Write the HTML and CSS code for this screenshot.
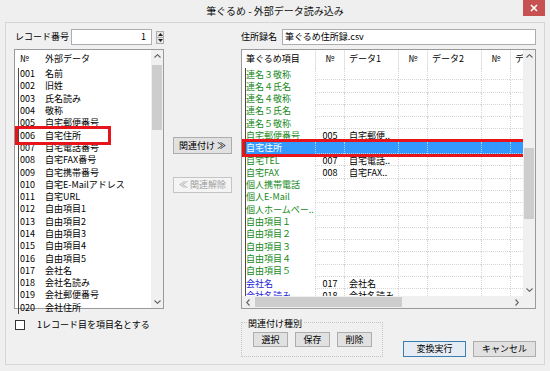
FILE: index.html
```html
<!DOCTYPE html>
<html lang="ja">
<head>
    <meta charset="UTF-8"/>
    <title>筆ぐるめ - 外部データ読み込み</title>
    <link rel="stylesheet" href="styles.css">
</head>
<body>
<div class="window">
    <div class="titlebar">
        <span></span>
        <span class="title">筆ぐるめ - 外部データ読み込み</span>
        <span class="close">
            <svg width="8" height="8" viewBox="0 0 8 8"><path d="M1 1L7 7M7 1L1 7" stroke="#fff" stroke-width="1.6"/></svg>
        </span>
    </div>

    <div class="client">
        <!-- 上段 -->
        <div class="rec">
            <span class="lbl">レコード番号</span>
            <div class="numbox">1</div>
            <div class="spin">
                <span><svg width="5" height="3" viewBox="0 0 5 3"><path d="M0 3L2.5 0L5 3Z" fill="#222"/></svg></span>
                <span><svg width="5" height="3" viewBox="0 0 5 3"><path d="M0 0L2.5 3L5 0Z" fill="#222"/></svg></span>
            </div>
        </div>
        <div></div>
        <div class="book">
            <span class="lbl">住所録名</span>
            <div class="textbox">筆ぐるめ住所録.csv</div>
        </div>

        <!-- 外部データ一覧 -->
        <div class="list">
            <div class="pane">
                <div class="lhead"><span class="no">№</span><span>外部データ</span></div>
                <div class="lbody">
                    <div class="row"><span class="no">001</span><span>名前</span></div>
                    <div class="row"><span class="no">002</span><span>旧姓</span></div>
                    <div class="row"><span class="no">003</span><span>氏名読み</span></div>
                    <div class="row"><span class="no">004</span><span>敬称</span></div>
                    <div class="row"><span class="no">005</span><span>自宅郵便番号</span></div>
                    <div class="row hl"><span class="no">006</span><span>自宅住所</span></div>
                    <div class="row"><span class="no">007</span><span>自宅電話番号</span></div>
                    <div class="row"><span class="no">008</span><span>自宅FAX番号</span></div>
                    <div class="row"><span class="no">009</span><span>自宅携帯番号</span></div>
                    <div class="row"><span class="no">010</span><span>自宅E-Mailアドレス</span></div>
                    <div class="row"><span class="no">011</span><span>自宅URL</span></div>
                    <div class="row"><span class="no">012</span><span>自由項目1</span></div>
                    <div class="row"><span class="no">013</span><span>自由項目2</span></div>
                    <div class="row"><span class="no">014</span><span>自由項目3</span></div>
                    <div class="row"><span class="no">015</span><span>自由項目4</span></div>
                    <div class="row"><span class="no">016</span><span>自由項目5</span></div>
                    <div class="row"><span class="no">017</span><span>会社名</span></div>
                    <div class="row"><span class="no">018</span><span>会社名読み</span></div>
                    <div class="row"><span class="no">019</span><span>会社郵便番号</span></div>
                    <div class="row"><span class="no">020</span><span>会社住所</span></div>
                </div>
            </div>
            <div class="vscroll">
                <span class="arrow"><svg width="7" height="4" viewBox="0 0 7 4"><path d="M0.5 3.5L3.5 0.7L6.5 3.5" fill="none" stroke="#606060" stroke-width="1.1"/></svg></span>
                <div class="track"><div class="thumb left-thumb"></div></div>
                <span class="arrow"><svg width="7" height="4" viewBox="0 0 7 4"><path d="M0.5 0.5L3.5 3.3L6.5 0.5" fill="none" stroke="#606060" stroke-width="1.1"/></svg></span>
            </div>
        </div>

        <!-- 関連付けボタン -->
        <div class="mid">
            <button class="btn link">関連付け ≫</button>
            <button class="btn unlink" disabled>≪ 関連解除</button>
        </div>

        <!-- 筆ぐるめ項目 -->
        <div class="grid">
            <div class="pane">
                <div class="ghead">
                    <span class="h">筆ぐるめ項目</span>
                    <span class="h n">№</span>
                    <span class="h">データ1</span>
                    <span class="h n">№</span>
                    <span class="h">データ2</span>
                    <span class="h n">№</span>
                    <span class="h">デ</span>
                </div>
                <div class="gbody">
                    <div class="grow g"><span class="nm">連名３敬称</span><span class="c n"></span><span class="c"></span><span class="c n"></span><span class="c"></span><span class="c n"></span><span class="c"></span></div>
                    <div class="grow g"><span class="nm">連名４氏名</span><span class="c n"></span><span class="c"></span><span class="c n"></span><span class="c"></span><span class="c n"></span><span class="c"></span></div>
                    <div class="grow g"><span class="nm">連名４敬称</span><span class="c n"></span><span class="c"></span><span class="c n"></span><span class="c"></span><span class="c n"></span><span class="c"></span></div>
                    <div class="grow g"><span class="nm">連名５氏名</span><span class="c n"></span><span class="c"></span><span class="c n"></span><span class="c"></span><span class="c n"></span><span class="c"></span></div>
                    <div class="grow g"><span class="nm">連名５敬称</span><span class="c n"></span><span class="c"></span><span class="c n"></span><span class="c"></span><span class="c n"></span><span class="c"></span></div>
                    <div class="grow g"><span class="nm">自宅郵便番号</span><span class="c n">005</span><span class="c">自宅郵便..</span><span class="c n"></span><span class="c"></span><span class="c n"></span><span class="c"></span></div>
                    <div class="grow sel"><span class="nm">自宅住所</span><span class="c n"></span><span class="c"></span><span class="c n"></span><span class="c"></span><span class="c n"></span><span class="c"></span></div>
                    <div class="grow g"><span class="nm">自宅TEL</span><span class="c n">007</span><span class="c">自宅電話..</span><span class="c n"></span><span class="c"></span><span class="c n"></span><span class="c"></span></div>
                    <div class="grow g"><span class="nm">自宅FAX</span><span class="c n">008</span><span class="c">自宅FAX..</span><span class="c n"></span><span class="c"></span><span class="c n"></span><span class="c"></span></div>
                    <div class="grow g"><span class="nm">個人携帯電話</span><span class="c n"></span><span class="c"></span><span class="c n"></span><span class="c"></span><span class="c n"></span><span class="c"></span></div>
                    <div class="grow g"><span class="nm">個人E-Mail</span><span class="c n"></span><span class="c"></span><span class="c n"></span><span class="c"></span><span class="c n"></span><span class="c"></span></div>
                    <div class="grow g"><span class="nm">個人ホームペー..</span><span class="c n"></span><span class="c"></span><span class="c n"></span><span class="c"></span><span class="c n"></span><span class="c"></span></div>
                    <div class="grow g"><span class="nm">自由項目１</span><span class="c n"></span><span class="c"></span><span class="c n"></span><span class="c"></span><span class="c n"></span><span class="c"></span></div>
                    <div class="grow g"><span class="nm">自由項目２</span><span class="c n"></span><span class="c"></span><span class="c n"></span><span class="c"></span><span class="c n"></span><span class="c"></span></div>
                    <div class="grow g"><span class="nm">自由項目３</span><span class="c n"></span><span class="c"></span><span class="c n"></span><span class="c"></span><span class="c n"></span><span class="c"></span></div>
                    <div class="grow g"><span class="nm">自由項目４</span><span class="c n"></span><span class="c"></span><span class="c n"></span><span class="c"></span><span class="c n"></span><span class="c"></span></div>
                    <div class="grow g"><span class="nm">自由項目５</span><span class="c n"></span><span class="c"></span><span class="c n"></span><span class="c"></span><span class="c n"></span><span class="c"></span></div>
                    <div class="grow b"><span class="nm">会社名</span><span class="c n">017</span><span class="c">会社名</span><span class="c n"></span><span class="c"></span><span class="c n"></span><span class="c"></span></div>
                    <div class="grow b"><span class="nm">会社名読み</span><span class="c n">018</span><span class="c">会社名読み</span><span class="c n"></span><span class="c"></span><span class="c n"></span><span class="c"></span></div>
                </div>
            </div>
            <div class="vscroll">
                <span class="arrow"><svg width="7" height="4" viewBox="0 0 7 4"><path d="M0.5 3.5L3.5 0.7L6.5 3.5" fill="none" stroke="#606060" stroke-width="1.1"/></svg></span>
                <div class="track"><div class="thumb right-thumb"></div></div>
                <span class="arrow"><svg width="7" height="4" viewBox="0 0 7 4"><path d="M0.5 0.5L3.5 3.3L6.5 0.5" fill="none" stroke="#606060" stroke-width="1.1"/></svg></span>
            </div>
            <div class="hscroll">
                <span class="arrow"><svg width="4" height="7" viewBox="0 0 4 7"><path d="M3.5 0.5L0.7 3.5L3.5 6.5" fill="none" stroke="#606060" stroke-width="1.1"/></svg></span>
                <div class="htrack"><div class="hthumb"></div></div>
                <span class="arrow"><svg width="4" height="7" viewBox="0 0 4 7"><path d="M0.5 0.5L3.3 3.5L0.5 6.5" fill="none" stroke="#606060" stroke-width="1.1"/></svg></span>
            </div>
            <div class="corner"></div>
        </div>

        <!-- 下段 -->
        <div class="chk">
            <span class="box"></span>
            <span>1レコード目を項目名とする</span>
        </div>
        <div></div>
        <div class="actions">
            <fieldset class="kind">
                <legend>関連付け種別</legend>
                <div class="kind-btns">
                    <button class="btn small">選択</button>
                    <button class="btn small">保存</button>
                    <button class="btn small">削除</button>
                </div>
            </fieldset>
            <button class="btn big default">変換実行</button>
            <button class="btn big">キャンセル</button>
        </div>
    </div>
</div>
</body>
</html>
```

FILE: styles.css
```css
* {
    box-sizing: border-box;
}

body {
    margin: 0;
    font-family: "Noto Sans CJK JP", sans-serif;
    font-size: 9px;
    color: #000;
    background: #efefef;
}

.window {
    width: 550px;
    height: 371px;
    background: #efefef;
}

.titlebar {
    height: 22px;
    display: grid;
    grid-template-columns: 1fr auto 1fr;
    align-items: center;
}

.title {
    font-size: 10px;
    line-height: 14px;
    color: #111;
}

.close {
    justify-self: end;
    align-self: start;
    width: 22px;
    height: 16px;
    margin-right: 5px;
    background: #c75050;
    display: flex;
    align-items: center;
    justify-content: center;
}

.client {
    margin-left: 5px;
    width: 540px;
    height: 343px;
    border: 1px solid #d6d6d6;
    background: #f0f0f0;
    padding: 6px 0 0 8px;
    display: grid;
    grid-template-columns: 150px 77px 295px;
    grid-template-rows: 16px 260px 1fr;
    row-gap: 4px;
}

.lbl {
    line-height: 12px;
}

/* 上段 */
.rec {
    display: flex;
    align-items: center;
}

.rec .lbl {
    width: 57px;
    padding-left: 1px;
}

.numbox {
    width: 81px;
    height: 16px;
    border: 1px solid #abadb3;
    background: #fff;
    text-align: right;
    padding-right: 5px;
    line-height: 14px;
}

.spin {
    width: 8px;
    height: 13px;
    margin-left: 4px;
    display: flex;
    flex-direction: column;
}

.spin span {
    flex: 1;
    border: 1px solid #adadad;
    background: #e6e6e6;
    display: flex;
    align-items: center;
    justify-content: center;
}

.spin span + span {
    border-top: none;
}

.book {
    display: flex;
    align-items: center;
}

.book .lbl {
    width: 41px;
}

.textbox {
    flex: 1;
    height: 16px;
    border: 1px solid #abadb3;
    background: #fff;
    padding-left: 2px;
    line-height: 14px;
}

/* 一覧共通 */
.list, .grid {
    border: 1px solid #9a9a9a;
    background: #fff;
    display: grid;
    grid-template-columns: 1fr 12px;
}

.grid {
    grid-template-rows: 1fr 12px;
}

.pane {
    display: flex;
    flex-direction: column;
    min-height: 0;
}

.vscroll {
    background: #f0f0f0;
    display: flex;
    flex-direction: column;
}

.arrow {
    height: 12px;
    flex: none;
    display: flex;
    align-items: center;
    justify-content: center;
}

.track {
    flex: 1;
    padding: 0 1px;
}

.thumb {
    background: #cdcdcd;
}

.left-thumb {
    margin-top: 3px;
    height: 65px;
}

.right-thumb {
    margin-top: 86px;
    height: 71px;
}

.hscroll {
    background: #f0f0f0;
    display: flex;
}

.hscroll .arrow {
    width: 12px;
    height: 12px;
}

.htrack {
    flex: 1;
    padding: 1px 0;
}

.hthumb {
    margin-left: 1px;
    width: 147px;
    height: 100%;
    background: #cdcdcd;
}

.corner {
    background: #f0f0f0;
}

/* 外部データ */
.lhead {
    height: 18px;
    flex: none;
    display: flex;
    align-items: center;
    padding-left: 5px;
    line-height: 12px;
}

.lhead .no {
    width: 25px;
}

.lbody {
    flex: 1;
    overflow-x: visible;
    overflow-y: clip;
}

.row {
    height: 12.3px;
    margin-left: 3px;
    border-left: 1px solid #4a4a4a;
    display: flex;
    align-items: center;
    line-height: 12px;
    white-space: nowrap;
}

.row .no {
    width: 26px;
    padding-left: 1px;
}

.row.hl {
    width: 90px;
    outline: 3px solid #e8141b;
}

/* 中央ボタン */
.mid {
    display: flex;
    flex-direction: column;
    align-items: flex-start;
    padding: 88px 0 0 9px;
}

.btn {
    font: inherit;
    color: #000;
    padding: 0;
    border: 1px solid #adadad;
    background: #e1e1e1;
    line-height: 12px;
}

.link {
    width: 59px;
    height: 17px;
}

.unlink {
    width: 59px;
    height: 16px;
    margin-top: 23px;
    background: #f4f4f4;
    border-color: #c4c4c4;
    color: #a0a0a0;
}

/* 筆ぐるめ項目 */
.ghead {
    height: 18px;
    flex: none;
    display: grid;
    grid-template-columns: 73px 29px 54px 29px 54px 29px 1fr;
    line-height: 12px;
}

.ghead .h {
    display: flex;
    align-items: center;
    padding-left: 4px;
    border-left: 1px solid #e5e5e5;
    white-space: nowrap;
    overflow: hidden;
}

.ghead .h:first-child {
    border-left: none;
}

.ghead .h.n {
    justify-content: center;
    padding-left: 0;
}

.gbody {
    flex: 1;
    padding-left: 3px;
    overflow-x: visible;
    overflow-y: clip;
}

.grow {
    height: 12.3px;
    display: grid;
    grid-template-columns: 70px 29px 54px 29px 54px 29px 1fr;
    line-height: 11px;
    white-space: nowrap;
}

.grow > span {
    overflow: hidden;
}

.grow .nm {
    border-left: 1px solid #4a4a4a;
    padding-top: 0.5px;
}

.grow .c {
    padding: 0.5px 0 0 4px;
    border-left: 1px dotted #d6d6d6;
    border-bottom: 1px dotted #d6d6d6;
    color: #000;
}

.grow .c.n {
    text-align: center;
    padding-left: 0;
}

.grow.g .nm {
    color: #178a1c;
}

.grow.b .nm {
    color: #1d1dd6;
}

.grow.sel {
    background: #3399ff;
    outline: 3px solid #e8141b;
}

.grow.sel .nm,
.grow.sel .c {
    color: #fff;
}

.grow.sel .c {
    border-left-color: #a8d2ff;
    border-bottom-color: #a8d2ff;
}

/* 下段 */
.chk {
    margin-top: 6px;
    display: flex;
    align-items: center;
    align-self: start;
    line-height: 12px;
}

.chk .box {
    width: 10px;
    height: 10px;
    margin-left: 1px;
    margin-right: 12px;
    border: 1px solid #333;
    background: #fff;
}

.actions {
    display: flex;
    align-items: flex-end;
    align-self: start;
}

.kind {
    width: 142px;
    margin: 2px 0 0;
    padding: 0 10px 9px 11px;
    border: 1px dotted #c4c4c4;
    min-width: 0;
}

.kind legend {
    padding: 4px 1px 0;
    margin-left: -6px;
    line-height: 10px;
}

.kind-btns {
    display: flex;
    gap: 7px;
    margin-top: 3px;
}

.small {
    width: 35px;
    height: 15px;
}

.big {
    width: 63px;
    height: 16px;
    margin-left: 7px;
}

.default {
    margin-left: 20px;
    border-color: #3c7fb1;
    background: #e5ecf3;
}
```
